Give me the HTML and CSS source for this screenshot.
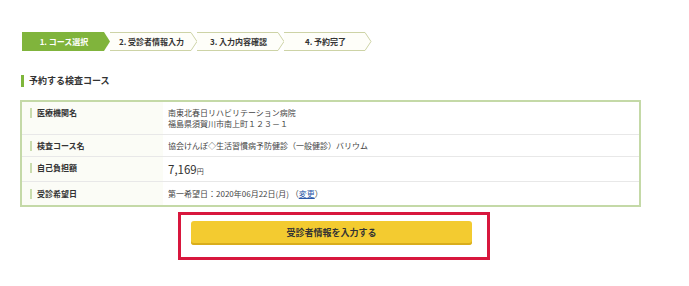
FILE: index.html
```html
<!DOCTYPE html>
<html lang="ja">
<head>
<meta charset="utf-8">
<link rel="stylesheet" href="styles.css">
</head>
<body>
<div class="page">
  <ol class="steps">
    <li class="step active">
      <svg class="step-bg" viewBox="0 0 88 19" preserveAspectRatio="none"><polygon points="0,0 82,0 88,9.5 82,19 0,19" fill="#80b43c"/></svg>
      <span>1. コース選択</span>
    </li>
    <li class="step">
      <svg class="step-bg" viewBox="0 0 88 19" preserveAspectRatio="none"><path d="M0,0.5 H81 L87,9.5 L81,18.5 H0" fill="#fefef9" stroke="#cdd3a6" stroke-width="1"/></svg>
      <span>2. 受診者情報入力</span>
    </li>
    <li class="step">
      <svg class="step-bg" viewBox="0 0 88 19" preserveAspectRatio="none"><path d="M0,0.5 H81 L87,9.5 L81,18.5 H0" fill="#fefef9" stroke="#cdd3a6" stroke-width="1"/></svg>
      <span>3. 入力内容確認</span>
    </li>
    <li class="step">
      <svg class="step-bg" viewBox="0 0 88 19" preserveAspectRatio="none"><path d="M0,0.5 H81 L87,9.5 L81,18.5 H0" fill="#fefef9" stroke="#cdd3a6" stroke-width="1"/></svg>
      <span>4. 予約完了</span>
    </li>
  </ol>

  <h2 class="section-title">予約する検査コース</h2>

  <table class="course">
    <tr>
      <th><span class="label">医療機関名</span></th>
      <td>南東北春日リハビリテーション病院<br>福島県須賀川市南上町１２３－１</td>
    </tr>
    <tr>
      <th><span class="label">検査コース名</span></th>
      <td>協会けんぽ◇生活習慣病予防健診（一般健診）バリウム</td>
    </tr>
    <tr>
      <th><span class="label">自己負担額</span></th>
      <td class="price"><span class="amount">7,169</span><span class="yen">円</span></td>
    </tr>
    <tr class="last">
      <th><span class="label">受診希望日</span></th>
      <td>第一希望日：2020年06月22日(月) （<a href="#" class="change">変更</a>）</td>
    </tr>
  </table>

  <div class="action-box">
    <button class="primary">受診者情報を入力する</button>
  </div>
</div>
</body>
</html>
```

FILE: styles.css
```css
* { box-sizing: border-box; }
html, body { margin: 0; padding: 0; background: #fff; }
body {
  font-family: "Noto Sans CJK JP", "Noto Sans", sans-serif;
  color: #333;
  font-size: 8px;
}
.page {
  width: 689px;
  padding: 32px 48px 0 20px;
}
.steps {
  list-style: none;
  margin: 0 0 0 2px;
  padding: 0;
  display: flex;
}
.step {
  position: relative;
  width: 87px;
  height: 19px;
  display: flex;
  align-items: center;
  justify-content: center;
  font-weight: bold;
  font-size: 8px;
  color: #333;
}
.step:first-child { width: 88px; }
.step-bg {
  position: absolute;
  left: 0;
  top: 0;
  width: 88px;
  height: 19px;
}
.step span {
  position: relative;
  padding-right: 4px;
}
.step.active { color: #fff; }
.section-title {
  margin: 24px 0 0 1px;
  padding-left: 5px;
  border-left: 3px solid #7fb63c;
  font-size: 9px;
  line-height: 12px;
  font-weight: bold;
  color: #333;
}
.course {
  margin-top: 13px;
  width: 621px;
  border-collapse: collapse;
  border: 2px solid #c4d9a7;
}
.course tr + tr th,
.course tr + tr td { border-top: 1px solid #e8e8e8; }
.course th {
  width: 142px;
  text-align: left;
  vertical-align: top;
  padding: 5px 0 5px 8px;
  background: #fbfcf6;
  font-weight: bold;
  font-size: 8px;
  line-height: 11px;
}
.label {
  display: block;
  padding-left: 5px;
  border-left: 2px solid #c9dcad;
  line-height: 10px;
  margin-top: 1px;
}
.course td {
  padding: 5px 5px;
  font-size: 8px;
  line-height: 11px;
  vertical-align: top;
  color: #444;
}
.course tr.last th,
.course tr.last td { padding-top: 6px; padding-bottom: 6px; }
.course td.price { padding-top: 5px; padding-bottom: 4px; }
.amount {
  font-size: 11.5px;
  line-height: 14px;
  color: #333;
}
.yen { font-size: 7px; line-height: 11px; }
.change {
  color: #2b58a8;
  text-decoration: underline;
}
.action-box {
  margin: 5px 0 0 158px;
  width: 312px;
  height: 48px;
  border: 3px solid #d8173d;
  padding: 6px 0 0 10px;
}
.primary {
  display: block;
  width: 281px;
  height: 24px;
  border: none;
  border-radius: 3px;
  background: #f3cb30;
  box-shadow: inset 0 -2px 0 #d9ad1c;
  font-family: "Noto Sans CJK JP", "Noto Sans", sans-serif;
  font-size: 9px;
  font-weight: bold;
  color: #333;
  padding: 0 0 2px;
}
```
